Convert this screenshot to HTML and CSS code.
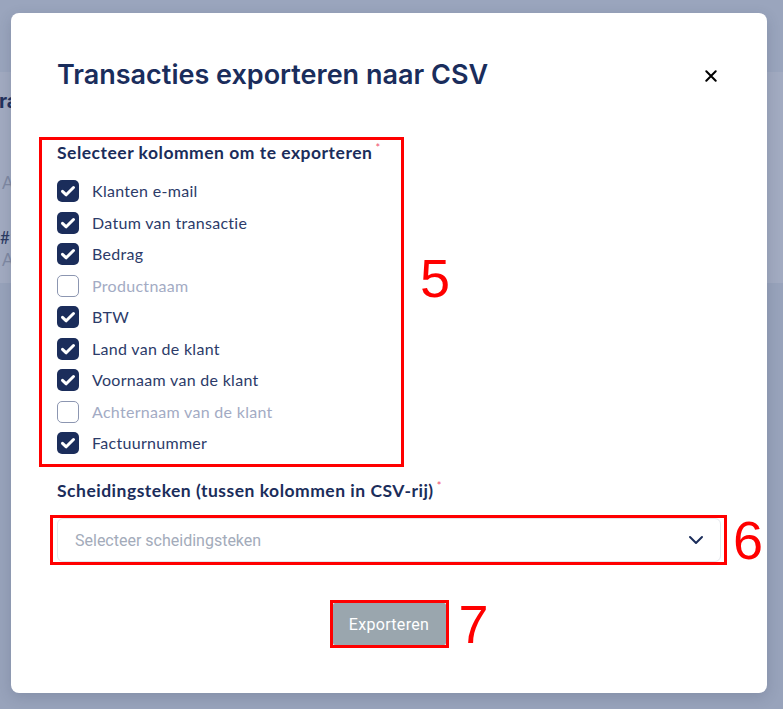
FILE: index.html
```html
<!DOCTYPE html>
<html lang="nl">
<head>
<meta charset="utf-8">
<title>Transacties exporteren naar CSV</title>
<link rel="stylesheet" href="styles.css">
</head>
<body>
<div class="page">
  <div class="page-header"></div>
  <div class="page-panel">
    <div class="page-title">ra</div>
    <div class="page-meta meta-first">A</div>
    <div class="page-id">#1</div>
    <div class="page-meta">A</div>
  </div>
</div>

<div class="modal">
  <div class="modal-head">
    <h2 class="modal-title">Transacties exporteren naar CSV</h2>
    <button class="close" aria-label="Sluiten">
      <svg width="12" height="12" viewBox="0 0 12 12"><path d="M1.3 1.3 L10.7 10.7 M10.7 1.3 L1.3 10.7" stroke="#000" stroke-width="2" stroke-linecap="round"/></svg>
    </button>
  </div>

  <div class="mark mark-columns">
    <div class="field-label">Selecteer kolommen om te exporteren<span class="req">*</span></div>
    <ul class="checks">
      <li class="check on"><span class="box"><svg width="22" height="22" viewBox="0 0 22 22"><path d="M5.5 11.3 L9.2 14.8 L16.5 7.5" fill="none" stroke="#fff" stroke-width="3" stroke-linecap="round" stroke-linejoin="round"/></svg></span><span class="text">Klanten e-mail</span></li>
      <li class="check on"><span class="box"><svg width="22" height="22" viewBox="0 0 22 22"><path d="M5.5 11.3 L9.2 14.8 L16.5 7.5" fill="none" stroke="#fff" stroke-width="3" stroke-linecap="round" stroke-linejoin="round"/></svg></span><span class="text">Datum van transactie</span></li>
      <li class="check on"><span class="box"><svg width="22" height="22" viewBox="0 0 22 22"><path d="M5.5 11.3 L9.2 14.8 L16.5 7.5" fill="none" stroke="#fff" stroke-width="3" stroke-linecap="round" stroke-linejoin="round"/></svg></span><span class="text">Bedrag</span></li>
      <li class="check off"><span class="box"></span><span class="text">Productnaam</span></li>
      <li class="check on"><span class="box"><svg width="22" height="22" viewBox="0 0 22 22"><path d="M5.5 11.3 L9.2 14.8 L16.5 7.5" fill="none" stroke="#fff" stroke-width="3" stroke-linecap="round" stroke-linejoin="round"/></svg></span><span class="text">BTW</span></li>
      <li class="check on"><span class="box"><svg width="22" height="22" viewBox="0 0 22 22"><path d="M5.5 11.3 L9.2 14.8 L16.5 7.5" fill="none" stroke="#fff" stroke-width="3" stroke-linecap="round" stroke-linejoin="round"/></svg></span><span class="text">Land van de klant</span></li>
      <li class="check on"><span class="box"><svg width="22" height="22" viewBox="0 0 22 22"><path d="M5.5 11.3 L9.2 14.8 L16.5 7.5" fill="none" stroke="#fff" stroke-width="3" stroke-linecap="round" stroke-linejoin="round"/></svg></span><span class="text">Voornaam van de klant</span></li>
      <li class="check off"><span class="box"></span><span class="text">Achternaam van de klant</span></li>
      <li class="check on"><span class="box"><svg width="22" height="22" viewBox="0 0 22 22"><path d="M5.5 11.3 L9.2 14.8 L16.5 7.5" fill="none" stroke="#fff" stroke-width="3" stroke-linecap="round" stroke-linejoin="round"/></svg></span><span class="text">Factuurnummer</span></li>
    </ul>
    <span class="num num-5">5</span>
  </div>

  <div class="field-label sep-label">Scheidingsteken (tussen kolommen in CSV-rij)<span class="req">*</span></div>

  <div class="mark mark-select">
    <div class="select">
      <span class="placeholder">Selecteer scheidingsteken</span>
      <svg width="16" height="10" viewBox="0 0 16 10"><path d="M2 2 L8 8 L14 2" fill="none" stroke="#1b2d5b" stroke-width="2" stroke-linecap="round" stroke-linejoin="round"/></svg>
    </div>
    <span class="num num-6">6</span>
  </div>

  <div class="actions">
    <div class="mark mark-button">
      <button class="export">Exporteren</button>
      <span class="num num-7">7</span>
    </div>
  </div>
</div>
</body>
</html>
```

FILE: styles.css
```css
html, body {
  margin: 0;
  padding: 0;
}
body {
  width: 783px;
  height: 709px;
  overflow: hidden;
  background: #98a3bb;
  font-family: "Lato", "Noto Sans", sans-serif;
  position: relative;
}

/* dimmed page behind the overlay */
.page-header {
  height: 72px;
  background: #9aa5bd;
}
.page-panel {
  height: 211px;
  background: #a2abc1;
  box-sizing: border-box;
  padding-top: 17px;
}
.page-title {
  margin-left: -1px;
  font-family: "Inter", sans-serif;
  font-weight: 700;
  font-size: 20px;
  line-height: 24px;
  color: #22325d;
}
.page-meta {
  margin-left: 2px;
  font-size: 17px;
  line-height: 22px;
  color: #7f89a3;
}
.meta-first {
  margin-top: 59px;
}
.page-id {
  margin-top: 33px;
  font-size: 17px;
  line-height: 22px;
  color: #2b3a63;
}

/* modal */
.modal {
  position: absolute;
  left: 11px;
  top: 13px;
  width: 756px;
  height: 680px;
  box-sizing: border-box;
  padding: 44px 46px 0;
  background: #fff;
  border-radius: 8px;
  box-shadow: 0 4px 14px rgba(40, 50, 80, 0.18);
}
.modal-head {
  display: flex;
  align-items: center;
  justify-content: space-between;
  height: 36px;
}
.modal-title {
  margin: 0;
  font-family: "Inter", sans-serif;
  font-weight: 600;
  font-size: 27px;
  line-height: 36px;
  color: #1a2d5c;
}
.close {
  width: 20px;
  height: 20px;
  padding: 0;
  border: 0;
  background: transparent;
  display: flex;
  align-items: center;
  justify-content: center;
  margin-top: 2px;
}

/* annotation marks */
.mark {
  position: relative;
  border: 3px solid #ff0000;
  box-sizing: border-box;
}
.num {
  position: absolute;
  font-family: "Liberation Sans", Arial, sans-serif;
  font-size: 54px;
  line-height: 54px;
  color: #ff0000;
}

.mark-columns {
  margin-top: 44px;
  margin-left: -18px;
  width: 365px;
  padding: 2px 0 10px 15px;
}
.num-5 {
  left: 378px;
  top: 111px;
}

.field-label {
  font-weight: 700;
  font-size: 17.5px;
  letter-spacing: 0.5px;
  line-height: 22px;
  color: #1b2d5b;
}
.req {
  position: relative;
  top: -7px;
  margin-left: 3px;
  font-size: 11px;
  line-height: 0;
  font-weight: 400;
  letter-spacing: 0;
  color: #f0506e;
}

.checks {
  list-style: none;
  margin: 16px 0 0;
  padding: 0;
  display: flex;
  flex-direction: column;
  gap: 9.5px;
}
.check {
  display: flex;
  align-items: center;
  gap: 13px;
  height: 22px;
}
.box {
  width: 22px;
  height: 22px;
  box-sizing: border-box;
  border-radius: 5px;
  display: flex;
  align-items: center;
  justify-content: center;
  background: #1b2d5b;
}
.check.off .box {
  background: #fff;
  border: 1px solid #8c96b1;
}
.text {
  font-size: 16px;
  line-height: 22px;
  color: #2c3b69;
  letter-spacing: 0.3px;
}
.check.off .text {
  color: #a3abc4;
}

.sep-label {
  margin-top: 13px;
}

.mark-select {
  margin-top: 13px;
  margin-left: -7px;
  width: 677px;
  padding: 0 3px 0 4px;
}
.select {
  height: 44px;
  box-sizing: border-box;
  border: 1px solid #e3e6ec;
  border-radius: 6px;
  display: flex;
  align-items: center;
  justify-content: space-between;
  padding: 0 16px 0 17px;
}
.placeholder {
  font-family: "Roboto", sans-serif;
  font-size: 16px;
  color: #a3abba;
}
.num-6 {
  left: 680px;
  top: -5px;
}

.actions {
  margin-top: 35px;
  display: flex;
  justify-content: center;
}
.export {
  display: block;
  width: 113px;
  height: 42px;
  border: 0;
  border-radius: 2px;
  background: #9aa6ae;
  color: #fff;
  font-family: "Roboto", sans-serif;
  font-size: 16px;
  letter-spacing: 0.3px;
  padding: 0;
}
.num-7 {
  left: 126px;
  top: -6px;
}
```
